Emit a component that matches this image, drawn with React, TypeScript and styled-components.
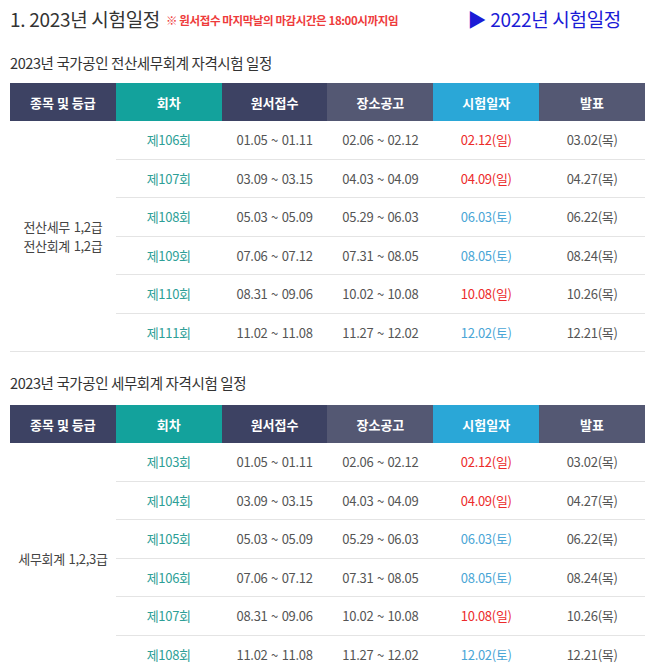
import styled, { createGlobalStyle } from "styled-components";

const GlobalStyle = createGlobalStyle`
    html, body {
        margin: 0;
        padding: 0;
        background: #ffffff;
    }
    body {
        font-family: "Noto Sans CJK KR", "Noto Sans", sans-serif;
        color: #333;
    }
`;

type Row = { round: string; apply: string; place: string; exam: string; sun: boolean; result: string };

const firstRows: Row[] = [
    { round: "제106회", apply: "01.05 ~ 01.11", place: "02.06 ~ 02.12", exam: "02.12(일)", sun: true, result: "03.02(목)" },
    { round: "제107회", apply: "03.09 ~ 03.15", place: "04.03 ~ 04.09", exam: "04.09(일)", sun: true, result: "04.27(목)" },
    { round: "제108회", apply: "05.03 ~ 05.09", place: "05.29 ~ 06.03", exam: "06.03(토)", sun: false, result: "06.22(목)" },
    { round: "제109회", apply: "07.06 ~ 07.12", place: "07.31 ~ 08.05", exam: "08.05(토)", sun: false, result: "08.24(목)" },
    { round: "제110회", apply: "08.31 ~ 09.06", place: "10.02 ~ 10.08", exam: "10.08(일)", sun: true, result: "10.26(목)" },
    { round: "제111회", apply: "11.02 ~ 11.08", place: "11.27 ~ 12.02", exam: "12.02(토)", sun: false, result: "12.21(목)" },
];

const secondRows: Row[] = firstRows.map((r, i) => ({ ...r, round: `제${103 + i}회` }));

const headers = [
    { label: "종목 및 등급", bg: "#3d4263" },
    { label: "회차", bg: "#13a29c" },
    { label: "원서접수", bg: "#3d4263" },
    { label: "장소공고", bg: "#545873" },
    { label: "시험일자", bg: "#2aa7d7" },
    { label: "발표", bg: "#545873" },
];

const Page = styled.div`
    padding: 0 11px 0 10px;
`;

const TopBar = styled.div`
    display: flex;
    align-items: center;
    height: 36px;
`;

const MainTitle = styled.h1`
    margin: 0;
    font-size: 19px;
    font-weight: 400;
    color: #333;
    letter-spacing: -0.3px;
`;

const Notice = styled.span`
    margin-left: 6px;
    font-size: 11.5px;
    font-weight: 700;
    color: #ee3b3b;
    letter-spacing: -0.4px;
    padding-top: 3px;
`;

const PrevLink = styled.a`
    margin-left: auto;
    margin-right: 24px;
    font-size: 19px;
    color: #1b1bd6;
    text-decoration: none;
    letter-spacing: -0.3px;
`;

const SectionTitle = styled.h2<{ $first?: boolean }>`
    margin: 0;
    padding: ${({ $first }) => ($first ? "17px 0 10px" : "21px 0 12px")};
    font-size: 14.5px;
    line-height: 20px;
    font-weight: 400;
    color: #333;
    letter-spacing: -0.4px;
`;

const Table = styled.table`
    width: 100%;
    border-collapse: collapse;
    table-layout: fixed;
`;

const Th = styled.th<{ $bg: string }>`
    height: 38px;
    padding: 0;
    background: ${({ $bg }) => $bg};
    color: #ffffff;
    font-size: 13px;
    font-weight: 700;
    text-align: center;
`;

const Td = styled.td<{ $color?: string }>`
    height: 37.5px;
    padding: 0;
    border-bottom: 1px solid #e4e4e4;
    text-align: center;
    font-size: 13px;
    color: ${({ $color }) => $color || "#555"};
    letter-spacing: -0.3px;
    word-spacing: 1px;
`;

const GradeCell = styled(Td)`
    color: #444;
    line-height: 19px;
`;

const ScheduleTable = ({ grade, rows }: { grade: string[]; rows: Row[] }) => (
    <Table>
        <thead>
            <tr>
                {headers.map((h) => (
                    <Th key={h.label} $bg={h.bg}>
                        {h.label}
                    </Th>
                ))}
            </tr>
        </thead>
        <tbody>
            {rows.map((r, i) => (
                <tr key={r.round}>
                    {i === 0 && (
                        <GradeCell rowSpan={rows.length}>
                            {grade.map((g) => (
                                <div key={g}>{g}</div>
                            ))}
                        </GradeCell>
                    )}
                    <Td $color="#2e9f97">{r.round}</Td>
                    <Td>{r.apply}</Td>
                    <Td>{r.place}</Td>
                    <Td $color={r.sun ? "#ec2b2b" : "#4aa6d6"}>{r.exam}</Td>
                    <Td>{r.result}</Td>
                </tr>
            ))}
        </tbody>
    </Table>
);

export default function App() {
    return (
        <>
            <GlobalStyle />
            <Page>
                <TopBar>
                    <MainTitle>1. 2023년 시험일정</MainTitle>
                    <Notice>※ 원서접수 마지막날의 마감시간은 18:00시까지임</Notice>
                    <PrevLink href="#">▶ 2022년 시험일정</PrevLink>
                </TopBar>
                <SectionTitle $first>2023년 국가공인 전산세무회계 자격시험 일정</SectionTitle>
                <ScheduleTable grade={["전산세무 1,2급", "전산회계 1,2급"]} rows={firstRows} />
                <SectionTitle>2023년 국가공인 세무회계 자격시험 일정</SectionTitle>
                <ScheduleTable grade={["세무회계 1,2,3급"]} rows={secondRows} />
            </Page>
        </>
    );
}
